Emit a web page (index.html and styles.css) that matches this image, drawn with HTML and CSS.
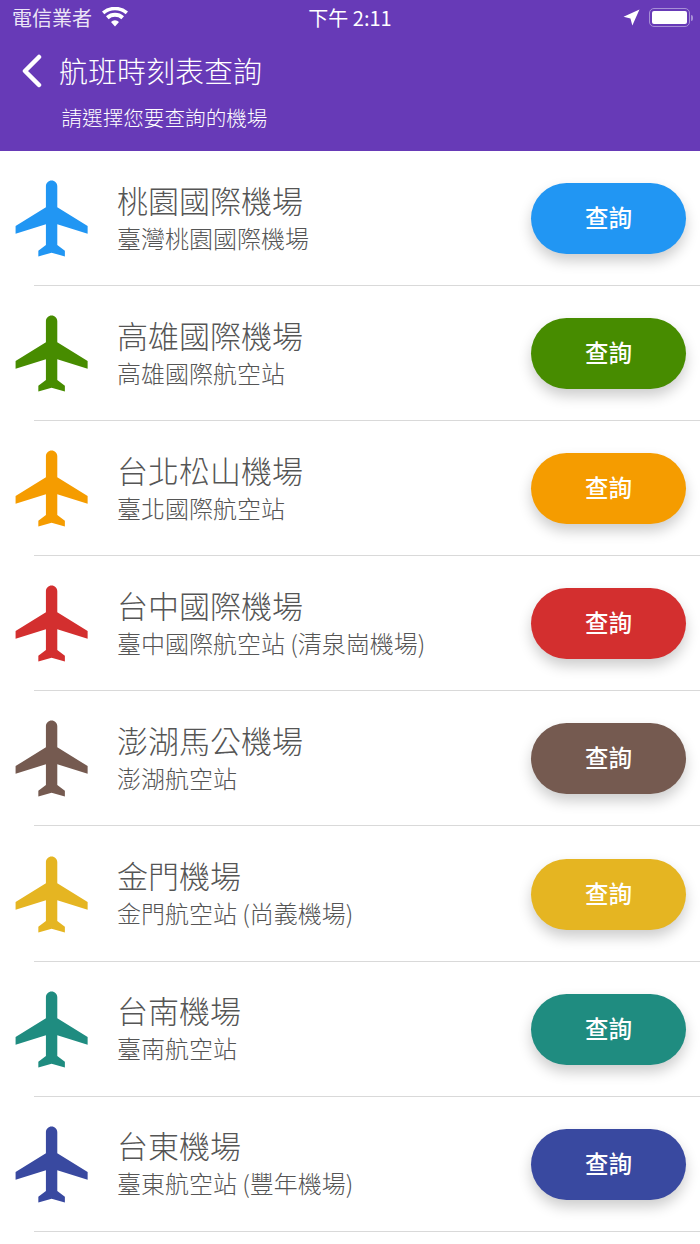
FILE: index.html
```html
<!DOCTYPE html>
<html lang="zh-Hant">
<head>
<meta charset="utf-8">
<title>航班時刻表查詢</title>
<link rel="stylesheet" href="styles.css">
</head>
<body>
<header class="header">
  <div class="status">
    <div class="status-left"><span>電信業者</span>
      <svg class="wifi" viewBox="0 0 26 20"><path d="M13 19.500 9 14.900a6 6 0 0 1 8 0zM6.600 12.200 4 9.200a13.800 13.800 0 0 1 18 0l-2.600 3a9.800 9.800 0 0 0-12.800 0zM2.300 7.300 0 4.600a19.800 19.800 0 0 1 26 0l-2.300 2.700a16.300 16.300 0 0 0-21.400 0z"/></svg>
    </div>
    <div class="status-time">下午 2:11</div>
    <div class="status-right">
      <svg class="arrow" viewBox="0 0 16 16"><path d="M15.500.5 8.800 15.500 7 9 .5 7.200z"/></svg>
      <div class="battery"><div class="battery-fill"></div></div>
      <div class="battery-cap"></div>
    </div>
  </div>
  <div class="nav">
    <svg class="back" viewBox="0 0 22 34"><path d="M18 3 4 17l14 14"/></svg>
    <h1 class="title">航班時刻表查詢</h1>
  </div>
  <p class="subtitle">請選擇您要查詢的機場</p>
</header>
<main class="list">
  <section class="row c-blue">
    <svg class="plane" viewBox="0 0 24 24"><path d="M21 16v-2l-8-5V3.500c0-.83-.67-1.500-1.500-1.500S10 2.670 10 3.500V9l-8 5v2l8-2.500V19l-2 1.500V22l3.500-1 3.500 1v-1.500L13 19v-5.500l8 2.500z"/></svg>
    <div class="info"><div class="name">桃園國際機場</div><div class="desc">臺灣桃園國際機場</div></div>
    <button class="btn">查詢</button>
  </section>
  <section class="row c-green">
    <svg class="plane" viewBox="0 0 24 24"><path d="M21 16v-2l-8-5V3.500c0-.83-.67-1.500-1.500-1.500S10 2.670 10 3.500V9l-8 5v2l8-2.500V19l-2 1.500V22l3.500-1 3.500 1v-1.500L13 19v-5.500l8 2.500z"/></svg>
    <div class="info"><div class="name">高雄國際機場</div><div class="desc">高雄國際航空站</div></div>
    <button class="btn">查詢</button>
  </section>
  <section class="row c-orange">
    <svg class="plane" viewBox="0 0 24 24"><path d="M21 16v-2l-8-5V3.500c0-.83-.67-1.500-1.500-1.500S10 2.670 10 3.500V9l-8 5v2l8-2.500V19l-2 1.500V22l3.500-1 3.500 1v-1.500L13 19v-5.500l8 2.500z"/></svg>
    <div class="info"><div class="name">台北松山機場</div><div class="desc">臺北國際航空站</div></div>
    <button class="btn">查詢</button>
  </section>
  <section class="row c-red">
    <svg class="plane" viewBox="0 0 24 24"><path d="M21 16v-2l-8-5V3.500c0-.83-.67-1.500-1.500-1.500S10 2.670 10 3.500V9l-8 5v2l8-2.500V19l-2 1.500V22l3.500-1 3.500 1v-1.500L13 19v-5.500l8 2.500z"/></svg>
    <div class="info"><div class="name">台中國際機場</div><div class="desc">臺中國際航空站 (清泉崗機場)</div></div>
    <button class="btn">查詢</button>
  </section>
  <section class="row c-brown">
    <svg class="plane" viewBox="0 0 24 24"><path d="M21 16v-2l-8-5V3.500c0-.83-.67-1.500-1.500-1.500S10 2.670 10 3.500V9l-8 5v2l8-2.500V19l-2 1.500V22l3.500-1 3.500 1v-1.500L13 19v-5.500l8 2.500z"/></svg>
    <div class="info"><div class="name">澎湖馬公機場</div><div class="desc">澎湖航空站</div></div>
    <button class="btn">查詢</button>
  </section>
  <section class="row c-yellow">
    <svg class="plane" viewBox="0 0 24 24"><path d="M21 16v-2l-8-5V3.500c0-.83-.67-1.500-1.500-1.500S10 2.670 10 3.500V9l-8 5v2l8-2.500V19l-2 1.500V22l3.500-1 3.500 1v-1.500L13 19v-5.500l8 2.500z"/></svg>
    <div class="info"><div class="name">金門機場</div><div class="desc">金門航空站 (尚義機場)</div></div>
    <button class="btn">查詢</button>
  </section>
  <section class="row c-teal">
    <svg class="plane" viewBox="0 0 24 24"><path d="M21 16v-2l-8-5V3.500c0-.83-.67-1.500-1.500-1.500S10 2.670 10 3.500V9l-8 5v2l8-2.500V19l-2 1.500V22l3.500-1 3.500 1v-1.500L13 19v-5.500l8 2.500z"/></svg>
    <div class="info"><div class="name">台南機場</div><div class="desc">臺南航空站</div></div>
    <button class="btn">查詢</button>
  </section>
  <section class="row c-indigo">
    <svg class="plane" viewBox="0 0 24 24"><path d="M21 16v-2l-8-5V3.500c0-.83-.67-1.500-1.500-1.500S10 2.670 10 3.500V9l-8 5v2l8-2.500V19l-2 1.500V22l3.500-1 3.500 1v-1.500L13 19v-5.500l8 2.500z"/></svg>
    <div class="info"><div class="name">台東機場</div><div class="desc">臺東航空站 (豐年機場)</div></div>
    <button class="btn">查詢</button>
  </section>
</main>
</body>
</html>
```

FILE: styles.css
```css
* { box-sizing: border-box; }
html, body { margin: 0; padding: 0; }
body {
  width: 700px;
  height: 1244px;
  overflow: hidden;
  background: #fff;
  font-family: "Noto Sans CJK TC", "Noto Sans", sans-serif;
}
.header {
  height: 151px;
  background: #673ab7;
  color: #fff;
}
.status {
  height: 35px;
  padding: 0 7px 0 12px;
  display: grid;
  grid-template-columns: 1fr auto 1fr;
  align-items: center;
}
.status-left {
  display: flex;
  align-items: center;
  gap: 10px;
  font-size: 20px;
  line-height: 35px;
  color: #ece6f6;
}
.wifi { width: 26px; height: 20px; fill: #fff; margin-top: -1px; }
.status-time { margin-left: -5px; font-size: 20px; font-weight: 400; line-height: 35px; }
.status-right { display: flex; align-items: center; justify-content: flex-end; }
.arrow { width: 17px; height: 17px; fill: #fff; margin-right: 9px; }
.battery {
  width: 41px;
  height: 19px;
  padding: 2px;
  border: 1.500px solid #a78fd6;
  border-radius: 5px;
}
.battery-fill { height: 100%; background: #fff; border-radius: 2px; }
.battery-cap { width: 2px; height: 6px; margin-left: 1px; background: #a78fd6; border-radius: 0 2px 2px 0; }
.nav {
  display: flex;
  align-items: center;
  height: 50px;
  margin-top: 11px;
  padding-left: 21px;
  gap: 16px;
}
.back { width: 22px; height: 34px; fill: none; stroke: #fff; stroke-width: 4.500px; stroke-linecap: round; stroke-linejoin: round; }
.title { margin: -3px 0 0; font-size: 29px; font-weight: 300; line-height: 50px; }
.subtitle { margin: 5px 0 0 61.500px; font-size: 20.600px; font-weight: 300; line-height: 32px; }
.row {
  position: relative;
  height: 135.095px;
  display: flex;
  align-items: center;
  padding-left: 6px;
  color: #555;
}
.row::after {
  content: "";
  position: absolute;
  left: 34px;
  right: 0;
  bottom: 0;
  height: 1px;
  background: #d9d9d9;
}
.plane { width: 91px; height: 91px; margin-left: 2px; flex: none; fill: var(--accent); }
.info { margin-left: 18px; margin-top: -4px; flex: 1; min-width: 0; }
.name { font-size: 31px; font-weight: 300; line-height: 42px; }
.desc { font-size: 24px; font-weight: 300; line-height: 34px; }
.btn {
  width: 155px;
  height: 71px;
  margin-right: 14px;
  padding: 0 0 3px;
  border: 0;
  border-radius: 36px;
  background: var(--accent);
  color: #fff;
  font-family: inherit;
  font-size: 23.500px;
  font-weight: 500;
  box-shadow: 0 7px 14px rgba(0, 0, 0, .2);
}
.c-blue { --accent: #2196f3; }
.c-green { --accent: #478c00; }
.c-orange { --accent: #f59c00; }
.c-red { --accent: #d32f2f; }
.c-brown { --accent: #755a50; }
.c-yellow { --accent: #e5b522; }
.c-teal { --accent: #1f8c80; }
.c-indigo { --accent: #3949a0; }
```
